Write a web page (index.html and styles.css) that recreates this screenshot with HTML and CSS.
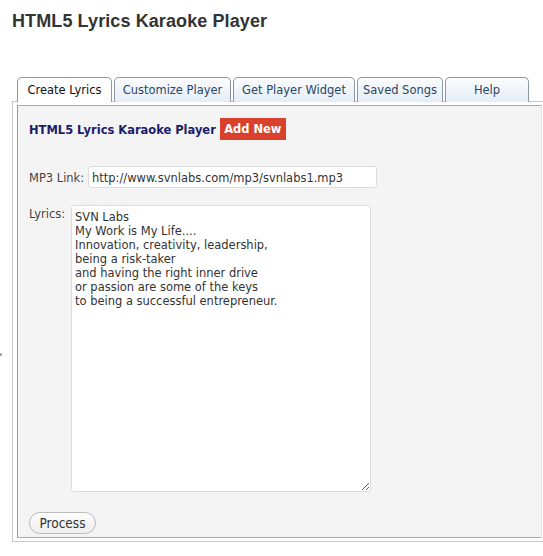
FILE: index.html
```html
<!DOCTYPE html>
<html>
<head>
<meta charset="utf-8">
<title>HTML5 Lyrics Karaoke Player</title>
<link rel="stylesheet" href="styles.css">
</head>
<body>
<h1 class="title">HTML5 Lyrics Karaoke Player</h1>
<span class="dot"></span>
<div class="tabs-wrap">
  <ul class="tabs">
    <li class="tab active t1">Create Lyrics</li>
    <li class="tab t2">Customize Player</li>
    <li class="tab t3">Get Player Widget</li>
    <li class="tab t4">Saved Songs</li>
    <li class="tab t5">Help</li>
  </ul>
  <div class="box">
    <div class="panel">
      <div class="panel-head">
        <span class="ph-title">HTML5 Lyrics Karaoke Player</span>
        <span class="add-new">Add New</span>
      </div>
      <div class="row row-link">
        <label class="lbl">MP3 Link:</label>
        <input class="inp" type="text" value="http://www.svnlabs.com/mp3/svnlabs1.mp3">
      </div>
      <div class="row row-lyrics">
        <label class="lbl">Lyrics:</label>
        <textarea class="ta">SVN Labs
My Work is My Life....
Innovation, creativity, leadership,
being a risk-taker
and having the right inner drive
or passion are some of the keys
to being a successful entrepreneur.</textarea>
      </div>
      <button class="btn" type="button">Process</button>
    </div>
  </div>
</div>
</body>
</html>
```
FILE: styles.css
```css
html, body {
  margin: 0;
  padding: 0;
  background: #fff;
  overflow: hidden;
}
body {
  position: relative;
  font-family: "DejaVu Sans Condensed", "DejaVu Sans", sans-serif;
  font-stretch: condensed;
  font-size: 12.75px;
  color: #333;
}
.title {
  margin: 0;
  padding: 10px 0 0 12px;
  height: 77px;
  box-sizing: border-box;
  font-family: "Liberation Sans", Arial, sans-serif;
  font-stretch: normal;
  font-size: 18px;
  font-weight: bold;
  letter-spacing: 0.1px;
  color: #333;
  line-height: 22px;
}
.dot {
  position: absolute;
  left: -1px;
  top: 353px;
  width: 3px;
  height: 3px;
  border-radius: 50%;
  background: #999;
}
.tabs-wrap {
  margin-left: 12px;
}
.tabs {
  list-style: none;
  margin: 0 0 -1px 0;
  padding: 0 0 0 5px;
  display: flex;
  gap: 2px;
  position: relative;
  z-index: 1;
}
.tab {
  box-sizing: border-box;
  height: 25px;
  border: 1px solid #8c98a4;
  border-bottom: none;
  border-radius: 5px 5px 0 0;
  background: linear-gradient(#fbfcfe, #e4edf5);
  color: #2b4766;
  font-size: 12.75px;
  line-height: 23px;
  text-align: center;
}
.tab.active {
  background: #fff;
  color: #111;
}
.t1 { width: 95px; }
.t2 { width: 117px; }
.t3 { width: 122px; }
.t4 { width: 86px; }
.t5 { width: 84px; }
.box {
  width: 547px;
  box-sizing: border-box;
  border: 1px solid #c8c8c8;
  background: #fff;
  padding: 3px 4px 3px 4px;
}
.panel {
  box-sizing: border-box;
  width: 525px;
  height: 433px;
  background: #f4f4f4;
  border: 1px solid #ababab;
  border-left-color: #9a9a9a;
  border-right-color: #e2e2e2;
  padding: 12px 0 0 11px;
  display: flex;
  flex-direction: column;
  align-items: flex-start;
}
.panel-head {
  display: flex;
  align-items: center;
  gap: 4px;
  height: 22px;
}
.ph-title {
  font-weight: bold;
  color: #1c1c6b;
}
.add-new {
  background: #d9412c;
  color: #fff;
  font-weight: bold;
  height: 22px;
  line-height: 22px;
  width: 66px;
  box-sizing: border-box;
  text-align: center;
}
.row {
  display: flex;
  align-items: flex-start;
}
.row-link {
  margin-top: 26px;
  align-items: center;
}
.row-lyrics {
  margin-top: 17px;
}
.lbl {
  color: #444;
}
.row-link .lbl {
  width: 59px;
}
.row-lyrics .lbl {
  width: 42px;
  padding-top: 1px;
}
.inp {
  box-sizing: border-box;
  width: 289px;
  height: 22px;
  border: 1px solid #dcdcdc;
  border-radius: 3px;
  background: #fff;
  padding: 0 3px;
  margin: 0;
  font-family: inherit;
  font-stretch: condensed;
  font-size: 12.75px;
  color: #333;
  outline: none;
}
.ta {
  box-sizing: border-box;
  width: 300px;
  height: 287px;
  border: 1px solid #dcdcdc;
  border-radius: 3px;
  background: #fff;
  padding: 4px 3px 2px 3px;
  margin: 0;
  font-family: inherit;
  font-stretch: condensed;
  font-size: 12.75px;
  line-height: 14px;
  color: #333;
  resize: both;
  outline: none;
}
.btn {
  margin-top: 20px;
  box-sizing: border-box;
  width: 67px;
  height: 22px;
  border: 1px solid #bcbcbc;
  border-radius: 11px;
  background: linear-gradient(#fdfdfd, #eeeeee);
  font-family: inherit;
  font-stretch: condensed;
  font-size: 13.5px;
  color: #333;
  padding: 0;
  line-height: 20px;
}
```
